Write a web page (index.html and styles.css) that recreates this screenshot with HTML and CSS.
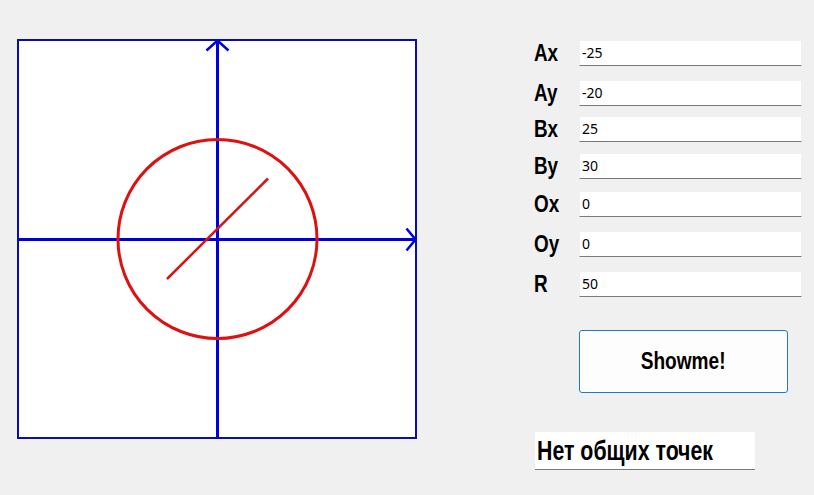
FILE: index.html
```html
<!DOCTYPE html>
<html lang="ru">
<head>
<meta charset="utf-8">
<title>Showme</title>
<link rel="stylesheet" href="styles.css">
</head>
<body>
<div class="window">
  <div class="canvas">
    <svg width="400" height="400" viewBox="0 0 400 400">
      <rect x="1" y="1" width="398" height="398" fill="#ffffff" stroke="#0c0caa" stroke-width="2"/>
      <line x1="200.5" y1="1" x2="200.5" y2="399" stroke="#0000dd" stroke-width="3"/>
      <line x1="1" y1="200.5" x2="399" y2="200.5" stroke="#0000dd" stroke-width="3"/>
      <polyline points="189.5,11.5 200.5,1.5 211.5,11.5" fill="none" stroke="#0000dd" stroke-width="2.5"/>
      <polyline points="389.5,189.5 398.5,200.5 389.5,211.5" fill="none" stroke="#0000dd" stroke-width="2.5"/>
      <circle cx="200.5" cy="200" r="99.5" fill="none" stroke="#dd1111" stroke-width="3"/>
      <line x1="150" y1="240" x2="251" y2="139.5" stroke="#dd1111" stroke-width="2.5"/>
    </svg>
  </div>
  <div class="panel">
    <div class="fields">
      <div class="row r-ax"><span class="lbl"><span class="sq">Ax</span></span><div class="input">-25</div></div>
      <div class="row r-ay"><span class="lbl"><span class="sq">Ay</span></span><div class="input">-20</div></div>
      <div class="row r-bx"><span class="lbl"><span class="sq">Bx</span></span><div class="input">25</div></div>
      <div class="row r-by"><span class="lbl"><span class="sq">By</span></span><div class="input">30</div></div>
      <div class="row r-ox"><span class="lbl"><span class="sq">Ox</span></span><div class="input">0</div></div>
      <div class="row r-oy"><span class="lbl"><span class="sq">Oy</span></span><div class="input">0</div></div>
      <div class="row r-r"><span class="lbl"><span class="sq">R</span></span><div class="input">50</div></div>
    </div>
    <button class="btn"><span class="btn-text">Showme!</span></button>
    <div class="result"><span class="result-text">Нет общих точек</span></div>
  </div>
</div>
</body>
</html>
```

FILE: styles.css
```css
html, body {
  margin: 0;
  padding: 0;
  background: #f0f0f0;
}
body {
  width: 814px;
  height: 495px;
  overflow: hidden;
  font-family: "Liberation Sans", Arial, sans-serif;
}
.window {
  display: flex;
  align-items: flex-start;
}
.canvas {
  margin: 39px 0 0 17px;
  width: 400px;
  height: 400px;
}
.canvas svg {
  display: block;
}
.panel {
  margin: 40px 0 0 117px;
  display: flex;
  flex-direction: column;
  align-items: flex-start;
}
.fields {
  display: flex;
  flex-direction: column;
}
.row {
  display: flex;
  align-items: center;
  height: 26px;
}
.r-ay { margin-top: 14px; }
.r-bx { margin-top: 10px; }
.r-by { margin-top: 11px; }
.r-ox { margin-top: 12px; }
.r-oy { margin-top: 14px; }
.r-r { margin-top: 14px; }
.lbl {
  width: 45px;
  font-weight: bold;
  font-size: 23px;
  line-height: 26px;
  color: #000;
  white-space: nowrap;
}
.sq {
  display: inline-block;
  transform: scaleX(0.82);
  transform-origin: left center;
}
.input {
  box-sizing: border-box;
  width: 223px;
  height: 26px;
  background: #fff;
  border: 1px solid #f0f0f0;
  border-bottom: 1px solid #7a7a7a;
  padding: 0 0 0 2px;
  font-family: "Noto Sans", "Open Sans", sans-serif;
  font-size: 14px;
  line-height: 24px;
  color: #000;
}
.btn {
  margin: 33px 0 0 45px;
  box-sizing: border-box;
  width: 209px;
  height: 63px;
  background: #fdfdfd;
  border: 1px solid #1e7bc4;
  border-radius: 3px;
  padding: 0;
  display: flex;
  align-items: center;
  justify-content: center;
  font-family: "Liberation Sans", Arial, sans-serif;
  font-weight: bold;
  font-size: 23px;
  color: #000;
}
.btn-text {
  display: inline-block;
  transform: scaleX(0.83);
}
.result {
  margin: 39px 0 0 1px;
  box-sizing: border-box;
  width: 220px;
  height: 38px;
  background: #fff;
  border-bottom: 1px solid #7a7a7a;
  padding: 0 0 0 2px;
  font-weight: bold;
  font-size: 27px;
  line-height: 38px;
  color: #000;
  white-space: nowrap;
  overflow: visible;
}
.result-text {
  display: inline-block;
  transform: scaleX(0.79);
  transform-origin: left center;
}
```
